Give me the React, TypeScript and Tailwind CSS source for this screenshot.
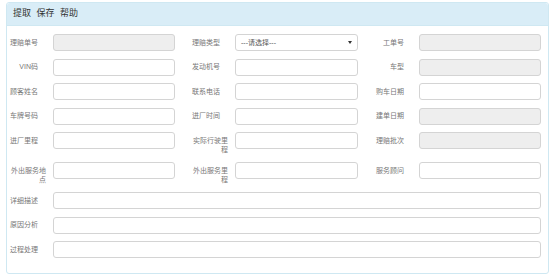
const FONT = '"Liberation Sans", "Noto Sans CJK SC", sans-serif';

type Field = { label: string; disabled?: boolean; select?: boolean; wrap?: boolean };

const rows: Field[][] = [
  [{ label: '理赔单号', disabled: true }, { label: '理赔类型', select: true }, { label: '工单号', disabled: true }],
  [{ label: 'VIN码' }, { label: '发动机号' }, { label: '车型', disabled: true }],
  [{ label: '顾客姓名' }, { label: '联系电话' }, { label: '购车日期' }],
  [{ label: '车牌号码' }, { label: '进厂时间' }, { label: '建单日期', disabled: true }],
  [{ label: '进厂里程' }, { label: '实际行驶里程', wrap: true }, { label: '理赔批次', disabled: true }],
  [{ label: '外出服务地点', wrap: true }, { label: '外出服务里程', wrap: true }, { label: '服务顾问' }],
];

const wideRows = ['详细描述', '原因分析', '过程处理'];

const Label = ({ text, wrap }: { text: string; wrap?: boolean }) =>
  wrap ? (
    <div className="flex justify-end pr-[7px] pt-[3.5px]">
      <div className="w-[38px] text-right text-[7px] leading-[9.5px] text-[#777]">{text}</div>
    </div>
  ) : (
    <div className="whitespace-nowrap pr-[15px] pt-[3.5px] text-right text-[7px] leading-[9.5px] text-[#777]">
      {text}
    </div>
  );

const Input = ({ disabled }: { disabled?: boolean }) => (
  <div
    className={`h-[17px] rounded-[3px] border border-[#d4d4d4] ${disabled ? 'bg-[#eeeeee]' : 'bg-white'}`}
  />
);

const Select = () => (
  <div className="flex h-[17px] items-center justify-between rounded-[3px] border border-[#d4d4d4] bg-white pl-[5px] pr-[5px]">
    <span className="text-[7px] leading-none text-[#555]">---请选择---</span>
    <span className="h-0 w-0 border-x-[2px] border-t-[3px] border-x-transparent border-t-[#333]" />
  </div>
);

export default function App() {
  return (
    <div className="h-[279px] w-[553px] bg-white pl-[6px] pr-[4px] pt-[2px]" style={{ fontFamily: FONT }}>
      <div className="h-[272px] rounded-[3px] border border-[#cfe8f2]">
        <div className="flex h-[23px] items-center gap-[5.5px] rounded-t-[3px] border-b border-[#cfe8f2] bg-[#d9edf7] pl-[6px] text-[9px] text-[#333]">
          <span>提取</span>
          <span>保存</span>
          <span>帮助</span>
        </div>
        <div className="flex flex-col gap-y-[7.5px] pr-[7px] pt-[8px]">
          {rows.map((row, i) => (
            <div key={i} className="grid grid-cols-[46px_122px_60px_123px_61px_122px] items-start">
              {row.map((f) => (
                <div key={f.label} className="contents">
                  <Label text={f.label} wrap={f.wrap} />
                  {f.select ? <Select /> : <Input disabled={f.disabled} />}
                </div>
              ))}
            </div>
          ))}
          {wideRows.map((label) => (
            <div key={label} className="grid grid-cols-[46px_1fr] items-start">
              <div className="whitespace-nowrap pl-[3px] pt-[3.5px] text-left text-[7px] leading-[9.5px] text-[#777]">
                {label}
              </div>
              <Input />
            </div>
          ))}
        </div>
      </div>
    </div>
  );
}
